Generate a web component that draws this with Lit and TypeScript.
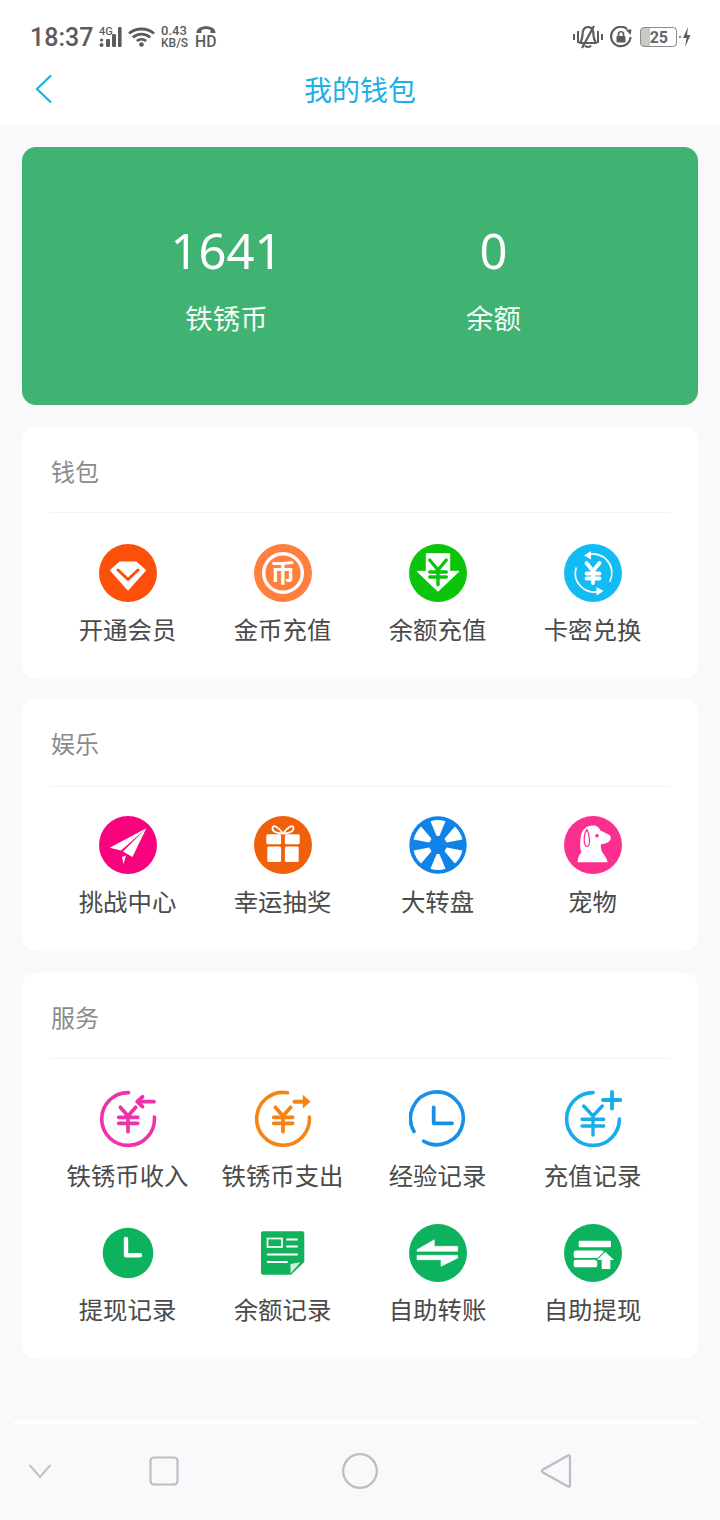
import { LitElement, html, css, svg, SVGTemplateResult } from "lit";
import { customElement } from "lit/decorators.js";

const yen = (c: string, x0: number, x1: number, top: number, mid: number, b1: number, b2: number, bottom: number, w: number, bx0?: number, bx1?: number) => svg`
  <path d="M${x0} ${top}L${(x0 + x1) / 2} ${mid}L${x1} ${top}M${bx0 ?? x0} ${b1}H${bx1 ?? x1}M${bx0 ?? x0} ${b2}H${bx1 ?? x1}M${(x0 + x1) / 2} ${mid}V${bottom}" fill="none" stroke="${c}" stroke-width="${w}" stroke-linecap="round" stroke-linejoin="round"/>`;

const wheelWedges = () => {
  const out: SVGTemplateResult[] = [];
  const p = (r: number, deg: number) => {
    const a = ((deg - 90) * Math.PI) / 180;
    return `${(29 + r * Math.cos(a)).toFixed(2)} ${(29 + r * Math.sin(a)).toFixed(2)}`;
  };
  for (let i = 0; i < 6; i++) {
    const d = i * 60;
    const inner = i % 3 === 0 ? 9 : 14;
    out.push(svg`<path fill="#fff" d="M${p(9, d - inner)}L${p(25, d - 17.5)}A25 25 0 0 1 ${p(25, d + 17.5)}L${p(9, d + inner)}Z"/>`);
  }
  return out;
};

const icons: Record<string, SVGTemplateResult> = {
  vip: svg`<circle cx="29" cy="29" r="29" fill="#fb4f0a"/>
    <path d="M20.7 18.3H37.3L46.3 26.3L29 45.7L11.7 26.3Z" fill="#fff" stroke="#fff" stroke-width="1.4" stroke-linejoin="round"/>
    <path d="M19 26L29 35.5L39 26" fill="none" stroke="#fb4f0a" stroke-width="3" stroke-linecap="round" stroke-linejoin="round"/>`,
  coin: svg`<circle cx="29" cy="29" r="29" fill="#ff7f3f"/>
    <circle cx="29" cy="29" r="19.3" fill="none" stroke="#fff" stroke-width="3.4"/>
    <text x="29" y="38" text-anchor="middle" font-size="25" font-weight="700" fill="#fff" font-family="'Noto Sans CJK SC',sans-serif">币</text>`,
  topup: svg`<circle cx="29" cy="29" r="29" fill="#0cc40c"/>
    <path d="M17.3 9.7H40.7V27.3H50L29 47.3L8 27.3H17.3Z" fill="#fff" stroke="#fff" stroke-width="1" stroke-linejoin="round"/>
    ${yen("#0cc40c", 20.7, 37.3, 16, 26, 28, 33, 40.7, 3.4)}`,
  card: svg`<circle cx="29" cy="29" r="29" fill="#12bcf3"/>
    <path d="M23 11A18.8 18.8 0 0 1 46 37" fill="none" stroke="#fff" stroke-width="1.7" stroke-linecap="round"/>
    <path d="M12 24A18.8 18.8 0 0 0 36 47" fill="none" stroke="#fff" stroke-width="1.7" stroke-linecap="round"/>
    <path d="M20 11.5L27 7V15.5Z M39.5 47L32.5 43V51.5Z" fill="#fff"/>
    ${yen("#fff", 22.5, 35.5, 19, 27, 29.5, 34.5, 39, 3.8)}`,
  plane: svg`<circle cx="29" cy="29" r="29" fill="#f8027e"/>
    <path d="M47.3 12.3L10.7 31.7L22 34.5Z" fill="#fff"/>
    <path d="M47.3 12.3L24 35.5L33.5 41Z" fill="#fff"/>
    <path d="M23 41L27 39.5L24.5 48Z" fill="#fff"/>`,
  gift: svg`<circle cx="29" cy="29" r="29" fill="#f0600a"/>
    <path d="M29 17.5C24 11 19 8 18.5 12C18 15.5 23 17.5 29 17.5C35 17.5 40 15.5 39.5 12C39 8 34 11 29 17.5Z" fill="none" stroke="#fff" stroke-width="1.8"/>
    <rect x="12.3" y="18.3" width="14.8" height="10" rx="1.5" fill="#fff"/>
    <rect x="30.9" y="18.3" width="14.8" height="10" rx="1.5" fill="#fff"/>
    <rect x="13.3" y="30.5" width="13.8" height="15.5" rx="1.5" fill="#fff"/>
    <rect x="30.9" y="30.5" width="13.8" height="15.5" rx="1.5" fill="#fff"/>`,
  wheel: svg`<circle cx="29" cy="29" r="28.7" fill="#0f83e8"/>${wheelWedges()}<circle cx="29" cy="29" r="7.6" fill="#0f83e8"/>`,
  dog: svg`<circle cx="29" cy="29" r="29" fill="#fb2f8e"/>
    <path d="M13.7 46.3C13.6 42 15 39 17.5 36C16 33.5 16 27 16.7 21C17.5 14 22 9.5 29 9.5C33 9.5 35.5 11.5 36.3 14.5L45.5 19C47.5 20.5 47 24 45 25.5C42.5 27.5 39.5 28 37 28.3C36.5 31 37 33.5 38.5 36.5C40.5 39.5 43 42.5 43.7 46.3Z" fill="#fff"/>
    <path d="M23 13.5C20 17 19.5 24 21 28.5C22 31 24 31 25 29C26 26 25.5 19 23 13.5Z" fill="#fff" stroke="#fb2f8e" stroke-width="1.2"/>
    <circle cx="33" cy="19.7" r="1.8" fill="#fb2f8e"/>`,
  income: svg`<path d="M29.5 2.6A26.4 26.4 0 1 0 55.4 27" fill="none" stroke="#ee33a8" stroke-width="3.6" stroke-linecap="round"/>
    <path d="M38.5 11.7H55M43.5 6.8L38.2 11.7L43.5 16.6" fill="none" stroke="#ee33a8" stroke-width="3.8" stroke-linecap="round" stroke-linejoin="round"/>
    ${yen("#ee33a8", 21.3, 36.7, 17.3, 26, 27.3, 33.3, 41.7, 3.7, 19.7, 38.7)}`,
  expense: svg`<path d="M33.5 2.8A26.4 26.4 0 1 0 55.4 27" fill="none" stroke="#f58414" stroke-width="3.6" stroke-linecap="round"/>
    <path d="M40.5 11.7H50" fill="none" stroke="#f58414" stroke-width="4" stroke-linecap="round"/>
    <path d="M48.8 4.8L56.6 11.7L48.8 18.4Z" fill="#f58414"/>
    ${yen("#f58414", 21.3, 36.7, 17.3, 26, 27.3, 33.3, 41.7, 3.7, 19.7, 38.7)}`,
  exp: svg`<path d="M14.7 51.2A26.4 26.4 0 1 0 5 41.5" fill="none" stroke="#1890e8" stroke-width="3.6" stroke-linecap="round"/>
    <path d="M24.7 17.3V33.3H43" fill="none" stroke="#1890e8" stroke-width="3.8" stroke-linecap="round" stroke-linejoin="round"/>`,
  rech: svg`<path d="M29 2.6A26.4 26.4 0 1 0 55.4 29" fill="none" stroke="#18ade8" stroke-width="3.6" stroke-linecap="round"/>
    <path d="M48 2V18.5M39 10H56.5" fill="none" stroke="#18ade8" stroke-width="3.8" stroke-linecap="round"/>
    ${yen("#18ade8", 19.7, 38.3, 16, 26, 29.3, 36, 45, 3.4, 18, 39.7)}`,
  withdraw: svg`<circle cx="29" cy="29" r="25.3" fill="#0db25e"/>
    <path d="M27 15V31.3H41" fill="none" stroke="#fff" stroke-width="4.4" stroke-linecap="round" stroke-linejoin="round"/>`,
  doc: svg`<path d="M9 7.3H48.3A2 2 0 0 1 50.3 9.3V38L37 50.7H9A2 2 0 0 1 7 48.7V9.3A2 2 0 0 1 9 7.3Z" fill="#12b15c"/>
    <path d="M46.5 38.2L36.5 49.5V40Z" fill="#cfeedd"/>
    <rect x="13.5" y="14.5" width="14.5" height="8.5" fill="none" stroke="#fff" stroke-width="1.7"/>
    <path d="M32.3 15.5H43.7M32.3 22.5H43.7M13 30.5H43.7M13 38H33.7" stroke="#fff" stroke-width="1.9" fill="none"/>`,
  transfer: svg`<circle cx="29" cy="29" r="29" fill="#0db25e"/>
    <path d="M8 25.7L25.3 15.7V22.3H48.7V27.3H8Z M8 31.3H48.7V34L32 42.3V35.7H8Z" fill="#fff" stroke="#fff" stroke-width=".6" stroke-linejoin="round"/>`,
  self: svg`<circle cx="29" cy="29" r="29" fill="#0db25e"/>
    <rect x="14.7" y="16.7" width="32.3" height="6.6" rx="1" fill="#fff"/>
    <rect x="9.7" y="26.5" width="30" height="7.4" rx="2" fill="#fff"/>
    <rect x="9.7" y="35.7" width="23.5" height="7.6" rx="2" fill="#fff"/>
    <path d="M41.3 28L50 36H46.3V45H37.7V36H33Z" fill="#fff" stroke="#0db25e" stroke-width="2" paint-order="stroke" stroke-linejoin="round"/>`,
};

const sections = [
  { t: "钱包", cls: "", items: [["vip", "开通会员"], ["coin", "金币充值"], ["topup", "余额充值"], ["card", "卡密兑换"]] },
  { t: "娱乐", cls: "tight", items: [["plane", "挑战中心"], ["gift", "幸运抽奖"], ["wheel", "大转盘"], ["dog", "宠物"]] },
  { t: "服务", cls: "", items: [["income", "铁锈币收入"], ["expense", "铁锈币支出"], ["exp", "经验记录"], ["rech", "充值记录"], ["withdraw", "提现记录"], ["doc", "余额记录"], ["transfer", "自助转账"], ["self", "自助提现"]] },
];

@customElement("app-root")
export class AppRoot extends LitElement {
  static styles = css`
    :host { display: block; width: 720px; height: 1520px; overflow: hidden; background: #f9f8fb; font-family: "Noto Sans CJK SC", "Noto Sans", sans-serif; }
    .top { background: #fff; height: 125px; display: flex; flex-direction: column; }
    .status { height: 58px; padding: 16px 29px 0 30px; box-sizing: border-box; display: flex; align-items: center; color: #5c5c5c; font-family: Roboto, sans-serif; }
    .time { font-size: 25px; font-weight: 500; width: 69px; }
    .status svg { display: block; flex: none; }
    .wifi { margin-left: 5px; }
    .bell-gap { margin-left: 7px; }
    .bolt-gap { margin-left: 2px; }
    .speed { margin-left: 6px; width: 34px; font-size: 13px; line-height: 12px; font-weight: 500; text-align: left; }
    .speed div:last-child { font-size: 12px; }
    .spacer { flex: 1; }
    .batt { width: 37px; height: 20px; box-sizing: border-box; border: 1.4px solid #8a8a8a; border-radius: 4px; margin-left: 8px; display: flex; align-items: center; justify-content: flex-end; background: linear-gradient(90deg, #c9c9c9 0 9px, transparent 9px); font-size: 16px; font-weight: 700; padding-right: 8px; color: #666; }
    .nav { flex: 1; display: grid; grid-template-columns: 1fr auto 1fr; align-items: center; padding-bottom: 5px; }
    .nav svg { display: block; margin-left: 35px; }
    .nav h1 { margin: 0; font-size: 28px; font-weight: 400; color: #1cb0e6; line-height: 40px; }
    .hero { margin: 22px 22px 0; height: 258px; border-radius: 14px; background: #40b373; color: #fff; display: grid; grid-template-columns: 267px 267px; justify-content: center; padding-top: 71px; box-sizing: border-box; text-align: center; }
    .num { font-family: "Noto Sans", sans-serif; font-weight: 400; font-size: 49px; line-height: 64px; }
    .lbl { font-size: 27.5px; line-height: 40px; margin-top: 15px; color: #f2fbf6; }
    .card { margin: 22px 22px 0; background: #fff; border-radius: 14px; padding: 28px 28px 33px; }
    .card.tight { margin-top: 20px; }
    .title { font-size: 24px; line-height: 34px; color: #8b8b8b; padding: 0 0 24px 1px; border-bottom: 1px solid #f2f2f5; margin-top: -1px; }
    .tight .title { padding-bottom: 26px; }
    .grid { display: grid; grid-template-columns: repeat(4, 155px); row-gap: 32px; padding-top: 31px; }
    .tight .grid { padding-top: 29px; }
    .item { display: flex; flex-direction: column; align-items: center; }
    .item svg { display: block; width: 58px; height: 58px; }
    .item span { margin-top: 10px; font-size: 24.4px; line-height: 34px; color: #4a4a4a; white-space: nowrap; }
    .bottom { margin: 62px 22px 0 14px; height: 3px; background: #fff; }
    .keys { display: flex; align-items: center; height: 94px; padding-left: 28px; }
    .keys svg { display: block; flex: none; }
    .k2 { margin-left: 97px; }
    .k3 { margin-left: 163px; }
    .k4 { margin-left: 162px; }
  `;

  render() {
    return html`
      <div class="top">
        <div class="status">
          <div class="time">18:37</div>
          <svg width="24" height="22" viewBox="0 0 24 22">
            <text x="0" y="9" font-size="11" font-family="Roboto, sans-serif" font-weight="500" fill="#5c5c5c">4G</text>
            <circle cx="2.5" cy="19" r="2" fill="#5c5c5c"/><circle cx="2.5" cy="14" r="1.6" fill="#5c5c5c"/>
            <rect x="7" y="13" width="4" height="8" rx="1.2" fill="#5c5c5c"/>
            <rect x="13" y="8" width="4" height="13" rx="1.2" fill="#5c5c5c"/>
            <rect x="19" y="1" width="3.6" height="20" rx="1.2" fill="#5c5c5c"/>
          </svg>
          <svg class="wifi" width="27" height="20" viewBox="0 0 27 20">
            <path d="M1 6.5C8 .5 19 .5 26 6.5M4.8 10.5C10 6 17 6 22.2 10.5M8.8 14C11.5 11.8 15.5 11.8 18.2 14" fill="none" stroke="#5c5c5c" stroke-width="2.8"/>
            <circle cx="13.5" cy="17.5" r="2.3" fill="#5c5c5c"/>
          </svg>
          <div class="speed"><div>0.43</div><div>KB/S</div></div>
          <svg width="22" height="26" viewBox="0 0 22 26">
            <path d="M1.5 8.5C1.5 0 20.5 0 20.5 8.5V9H15.5V6C12 4.5 10 4.5 6.5 6V9H1.5Z" fill="#5c5c5c"/>
            <text x="0" y="23" font-size="16" font-family="Roboto, sans-serif" font-weight="500" fill="#5c5c5c" textLength="21.5" lengthAdjust="spacingAndGlyphs">HD</text>
          </svg>
          <div class="spacer"></div>
          <svg width="30" height="24" viewBox="0 0 30 24">
            <path d="M1 9V15M5 6V18M25 6V18M29 9V15" stroke="#5c5c5c" stroke-width="2" fill="none"/>
            <path d="M15 2C10.5 2 9.5 6 9.5 10C9.5 14 8 16 7 18H23C22 16 20.5 14 20.5 10C20.5 6 19.5 2 15 2Z" fill="none" stroke="#5c5c5c" stroke-width="2.2" stroke-linejoin="round"/>
            <path d="M12 20.5C13 22.5 17 22.5 18 20.5" fill="none" stroke="#5c5c5c" stroke-width="2"/>
            <path d="M21 1L9 23" stroke="#5c5c5c" stroke-width="2.2"/>
          </svg>
          <svg class="bell-gap" width="22" height="22" viewBox="0 0 22 22">
            <path d="M17 3A9.7 9.7 0 1 0 20.5 11" fill="none" stroke="#5c5c5c" stroke-width="2.2"/>
            <path d="M20.5 9L21.5 3.5L15.5 3.5Z" fill="#5c5c5c"/>
            <rect x="6.5" y="10" width="9" height="6.5" rx="1" fill="#5c5c5c"/>
            <path d="M8.5 10V8C8.5 5 13.5 5 13.5 8V10" fill="none" stroke="#5c5c5c" stroke-width="1.7"/>
          </svg>
          <div class="batt">25</div>
          <svg class="bolt-gap" width="12" height="22" viewBox="0 0 12 22">
            <circle cx="1" cy="11" r="1" fill="#5c5c5c"/>
            <path d="M9 1L4 12H7.5L6 21L11.5 9H8Z" fill="#5c5c5c"/>
          </svg>
        </div>
        <div class="nav">
          <svg width="18" height="30" viewBox="0 0 18 30"><path d="M16 1.5L2 15L16 28.5" fill="none" stroke="#1cb0e6" stroke-width="2.2"/></svg>
          <h1>我的钱包</h1>
          <span></span>
        </div>
      </div>
      <div class="hero">
        <div><div class="num">1641</div><div class="lbl">铁锈币</div></div>
        <div><div class="num">0</div><div class="lbl">余额</div></div>
      </div>
      ${sections.map((s) => html`
        <section class="card ${s.cls}">
          <div class="title">${s.t}</div>
          <div class="grid">
            ${s.items.map(([ic, label]) => html`
              <div class="item"><svg viewBox="0 0 58 58">${icons[ic]}</svg><span>${label}</span></div>`)}
          </div>
        </section>`)}
      <div class="bottom"></div>
      <div class="keys">
        <svg width="24" height="16" viewBox="0 0 24 16"><path d="M1.5 2L12 14L22.5 2" fill="none" stroke="#c2c2c6" stroke-width="2"/></svg>
        <svg class="k2" width="30" height="30" viewBox="0 0 30 30"><rect x="1.5" y="1.5" width="27" height="27" rx="3.5" fill="none" stroke="#bdbdc1" stroke-width="2.2"/></svg>
        <svg class="k3" width="36" height="36" viewBox="0 0 36 36"><circle cx="18" cy="18" r="16.8" fill="none" stroke="#bdbdc1" stroke-width="2.2"/></svg>
        <svg class="k4" width="32" height="36" viewBox="0 0 32 36"><path d="M28 2.5C29 2 30 2.5 30 4V32C30 33.5 29 34 28 33.5L3 19.5C1.5 18.5 1.5 17.5 3 16.5Z" fill="none" stroke="#bdbdc1" stroke-width="2.2" stroke-linejoin="round"/></svg>
      </div>
    `;
  }
}
